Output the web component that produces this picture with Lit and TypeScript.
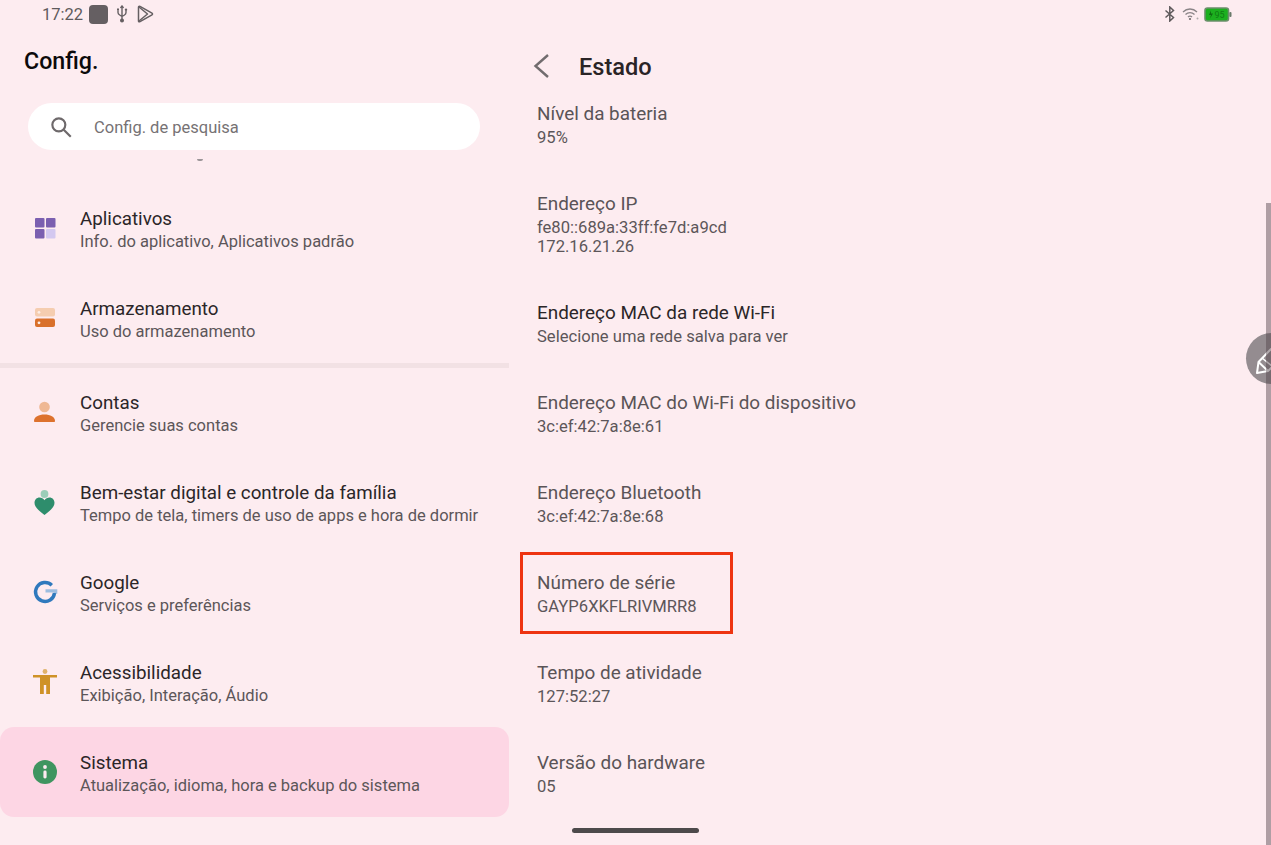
import { LitElement, html, css, svg } from "lit";
import { customElement } from "lit/decorators.js";

const icons: Record<string, unknown> = {
  apps: svg`<rect x="5" y="5" width="9.500" height="9.500" rx="1" fill="#7b5fb0"/><rect x="16" y="5" width="9.500" height="9.500" rx="1" fill="#7b5fb0"/><rect x="5" y="16" width="9.500" height="9.500" rx="1" fill="#7b5fb0"/><rect x="16" y="16" width="9.500" height="9.500" rx="1" fill="#d3c8f0"/>`,
  storage: svg`<rect x="5" y="5" width="20" height="8.500" rx="2" fill="#f5cdb0"/><circle cx="9" cy="9.300" r="1.400" fill="#fdeee6"/><rect x="5" y="15.500" width="20" height="8.500" rx="2" fill="#d9702b"/><circle cx="9" cy="19.800" r="1.400" fill="#fdeee6"/>`,
  account: svg`<circle cx="14.500" cy="10" r="5.300" fill="#efb894"/><path d="M4 24c0-4.400 4.800-6.600 10.500-6.600S25 19.600 25 24c0 .6-.5 1-1 1H5c-.5 0-1-.4-1-1z" fill="#dd722d"/>`,
  wellbeing: svg`<circle cx="14.500" cy="7" r="3.900" fill="#9ccdb8"/><path d="M14.500 28C9.500 24 4.500 20.500 4.500 15.800 4.500 12.700 6.800 10.500 9.500 10.500c2 0 3.800 1 5 2.700 1.200-1.700 3-2.700 5-2.700 2.700 0 5 2.200 5 5.300 0 4.700-5 8.200-10 12.200z" fill="#2e8d6c"/>`,
  google: svg`<path d="M15.500 13.800h10.200v3" fill="none" stroke="#9dbde0" stroke-width="3.200"/><path d="M21.800 8.300A9.500 9.500 0 1 0 24.500 16" fill="none" stroke="#2f79bd" stroke-width="3.400"/>`,
  a11y: svg`<circle cx="15" cy="4.500" r="2.400" fill="#e0b26a"/><path d="M3 8h24v2.500h-7V27h-3.800v-9h-2.400v9H10V10.500H3z" fill="#cf9227"/>`,
  info: svg`<circle cx="15" cy="15" r="12" fill="#3f9560"/><rect x="13.400" y="13.500" width="3.200" height="8" rx="1.400" fill="#fdeaf0"/><circle cx="15" cy="10" r="1.900" fill="#fdeaf0"/>`,
};

interface Row { icon: string; title: string; sub: string; active?: boolean }
interface Info { title: string; lines: string[]; strong?: boolean }

const groupA: Row[] = [
  { icon: "apps", title: "Aplicativos", sub: "Info. do aplicativo, Aplicativos padrão" },
  { icon: "storage", title: "Armazenamento", sub: "Uso do armazenamento" },
];
const groupB: Row[] = [
  { icon: "account", title: "Contas", sub: "Gerencie suas contas" },
  { icon: "wellbeing", title: "Bem-estar digital e controle da família", sub: "Tempo de tela, timers de uso de apps e hora de dormir" },
  { icon: "google", title: "Google", sub: "Serviços e preferências" },
  { icon: "a11y", title: "Acessibilidade", sub: "Exibição, Interação, Áudio" },
  { icon: "info", title: "Sistema", sub: "Atualização, idioma, hora e backup do sistema", active: true },
];
const infos: Info[] = [
  { title: "Nível da bateria", lines: ["95%"] },
  { title: "Endereço IP", lines: ["fe80::689a:33ff:fe7d:a9cd", "172.16.21.26"] },
  { title: "Endereço MAC da rede Wi-Fi", lines: ["Selecione uma rede salva para ver"], strong: true },
  { title: "Endereço MAC do Wi-Fi do dispositivo", lines: ["3c:ef:42:7a:8e:61"] },
  { title: "Endereço Bluetooth", lines: ["3c:ef:42:7a:8e:68"] },
  { title: "Número de série", lines: ["GAYP6XKFLRIVMRR8"] },
  { title: "Tempo de atividade", lines: ["127:52:27"] },
  { title: "Versão do hardware", lines: ["05"] },
];

@customElement("app-root")
export class AppRoot extends LitElement {
  static styles = css`
    :host { display: block; position: relative; width: 1271px; height: 845px; overflow: hidden; background: #fdecf0; font-family: Roboto, "Noto Sans", sans-serif; color: #1f1a1c; }
    .status { height: 28px; display: flex; align-items: center; padding: 0 39px 0 42px; color: #5f5a5c; }
    .time { font-size: 16.500px; width: 47px; }
    .status svg { display: block; }
    .square { width: 19px; height: 19px; border-radius: 4px; background: #655f62; margin-right: 7px; }
    .usb { margin-right: 8px; }
    .bt { margin-right: 6px; }
    .wifi { margin-right: 4px; }
    .spacer { flex: 1; }
    .main { display: grid; grid-template-columns: 509px 1fr; height: 817px; }
    .left { display: flex; flex-direction: column; min-width: 0; }
    .apptitle { font-size: 23.200px; font-weight: 500; color: #0c0a0b; margin: 20px 0 0 24px; height: 26px; line-height: 26px; }
    .search { margin: 29px 0 0 28px; width: 452px; height: 47px; border-radius: 24px; background: #fff; display: flex; align-items: center; color: #767274; font-size: 16.500px; box-sizing: border-box; padding-left: 20px; }
    .search svg { margin-right: 20px; }
    .search span { padding-top: 2px; }
    .clip { height: 33px; overflow: hidden; }
    .clip span { display: block; margin: 9px 0 0 197px; width: 6px; height: 2px; border-radius: 0 0 3px 3px; background: #9b9598; }
    .row { height: 90px; display: flex; align-items: center; box-sizing: border-box; padding-left: 30px; }
    .row.active { background: #fdd6e4; border-radius: 14px; }
    .row svg { width: 30px; height: 30px; margin-right: 20px; flex: none; }
    .rowtext { padding-top: 3px; }
    .divider { height: 5px; margin-bottom: -1px; background: #f2e1e4; }
    .rt { font-size: 18.800px; line-height: 24px; color: #2b2628; }
    .rs { font-size: 16.500px; line-height: 22px; color: #5c5659; }
    .right { display: flex; flex-direction: column; min-width: 0; }
    .head { height: 51px; display: flex; align-items: center; box-sizing: border-box; padding: 25px 0 0 23px; }
    .head svg { margin-right: 29px; }
    .head h1 { margin: 0; padding-top: 2px; font-size: 23.600px; font-weight: 500; color: #2a2426; }
    .info { box-sizing: border-box; padding: 23px 0 0 28px; height: 90px; }
    .info.multi { height: 109px; }
    .it { font-size: 18.900px; line-height: 24px; color: #5a5457; }
    .it.strong { color: #2b2628; }
    .il { font-size: 16.600px; line-height: 19px; color: #5c5659; padding-top: 2px; }
    .il + .il { padding-top: 0; }
    .mark { position: absolute; left: 520px; top: 552px; width: 213px; height: 82px; box-sizing: border-box; border: 3px solid #ee3411; }
    .scroll { position: absolute; left: 1266px; top: 203px; width: 5px; height: 642px; background: rgba(80, 65, 72, 0.45); }
    .float { position: absolute; left: 1246px; top: 333px; width: 50px; height: 51px; border-radius: 50%; background: #948c90; overflow: hidden; }
    .float svg { display: block; margin: 11px 0 0 6px; }
    .home { position: absolute; left: 572px; top: 828px; width: 127px; height: 5px; border-radius: 3px; background: #4d4a4b; }
  `;

  private row(r: Row) {
    return html`<div class="row ${r.active ? "active" : ""}">
      <svg viewBox="0 0 30 30">${icons[r.icon]}</svg>
      <div class="rowtext"><div class="rt">${r.title}</div><div class="rs">${r.sub}</div></div>
    </div>`;
  }

  render() {
    return html`
      <div class="status">
        <span class="time">17:22</span>
        <div class="square"></div>
        <svg class="usb" width="14" height="18" viewBox="0 0 14 18" fill="none" stroke="#655f62" stroke-width="1.400"><path d="M7 1.500V16M3 5.500v2c0 1.500.8 2 1.700 2.500L7 11.500l2.500-1.500c.9-.5 1.500-1 1.500-2.500V6"/><circle cx="7" cy="15.500" r="1.300" fill="#655f62"/><path d="M5.500 3L7 1l1.500 2"/><rect x="2" y="3.500" width="2" height="2" fill="#655f62" stroke="none"/><circle cx="11" cy="4.800" r="1.200" fill="#655f62" stroke="none"/></svg>
        <svg width="17" height="18" viewBox="0 0 17 18" fill="none" stroke="#655f62" stroke-width="1.500" stroke-linejoin="round"><path d="M1.500 2.200c0-.8.8-1.200 1.500-.8l12 6.800c.7.400.7 1.300 0 1.700l-12 6.800c-.7.400-1.500 0-1.500-.8z"/><path d="M2 2l8.500 7L2 16"/></svg>
        <div class="spacer"></div>
        <svg class="bt" width="12" height="16" viewBox="0 0 12 16" fill="none" stroke="#5f5a5c" stroke-width="1.500"><path d="M1.500 4.500l8 7-3.700 3.500V1l3.700 3.500-8 7"/></svg>
        <svg class="wifi" width="18" height="14" viewBox="0 0 18 14" fill="none" stroke="#8a8487" stroke-width="1.300"><path d="M1 5c4-4 10-4 14 0M3.500 7.500c2.500-2.500 6.500-2.500 9 0M6 10c1-1 3-1 4 0"/><circle cx="8" cy="12" r="1.100" fill="#6e686b" stroke="none"/><circle cx="15.500" cy="11.500" r="1" fill="#b0abad" stroke="none"/></svg>
        <svg width="28" height="15" viewBox="0 0 28 15"><rect x="1" y="1" width="23.500" height="13" rx="2.500" fill="#1cb01f" stroke="#6b8f6b" stroke-width="1.600"/><rect x="25.300" y="5" width="2.200" height="5" rx="1" fill="#6a7a6a"/><path d="M7 3.500L5 8h2l-1 3.500 3-5H7z" fill="#0d6d10"/><text x="10.500" y="11" font-size="9" fill="#0f7d13" font-family="Roboto">95</text></svg>
      </div>
      <div class="main">
        <div class="left">
          <div class="apptitle">Config.</div>
          <div class="search">
            <svg width="26" height="26" viewBox="0 0 24 24" fill="none" stroke="#6e696b" stroke-width="2"><circle cx="10" cy="10" r="6"/><path d="M14.500 14.500L21 21"/></svg>
            <span>Config. de pesquisa</span>
          </div>
          <div class="clip"><span></span></div>
          ${groupA.map((r) => this.row(r))}
          <div class="divider"></div>
          ${groupB.map((r) => this.row(r))}
        </div>
        <div class="right">
          <div class="head">
            <svg width="18" height="26" viewBox="0 0 18 26" fill="none" stroke="#716c6e" stroke-width="2.400"><path d="M16 2L3.500 13 16 24"/></svg>
            <h1>Estado</h1>
          </div>
          ${infos.map(
            (i) => html`<div class="info ${i.lines.length > 1 ? "multi" : ""}">
              <div class="it ${i.strong ? "strong" : ""}">${i.title}</div>
              ${i.lines.map((l) => html`<div class="il">${l}</div>`)}
            </div>`
          )}
        </div>
      </div>
      <div class="mark"></div>
      <div class="float">
        <svg width="30" height="30" viewBox="0 0 30 30" fill="none" stroke="#fff" stroke-width="2" stroke-linejoin="round"><path d="M5 29l1.500-11L19 5l11 9-14 13z"/><path d="M6.500 18L16 27"/><path d="M10 14l10 8" stroke-width="1.500"/></svg>
      </div>
      <div class="scroll"></div>
      <div class="home"></div>
    `;
  }
}
